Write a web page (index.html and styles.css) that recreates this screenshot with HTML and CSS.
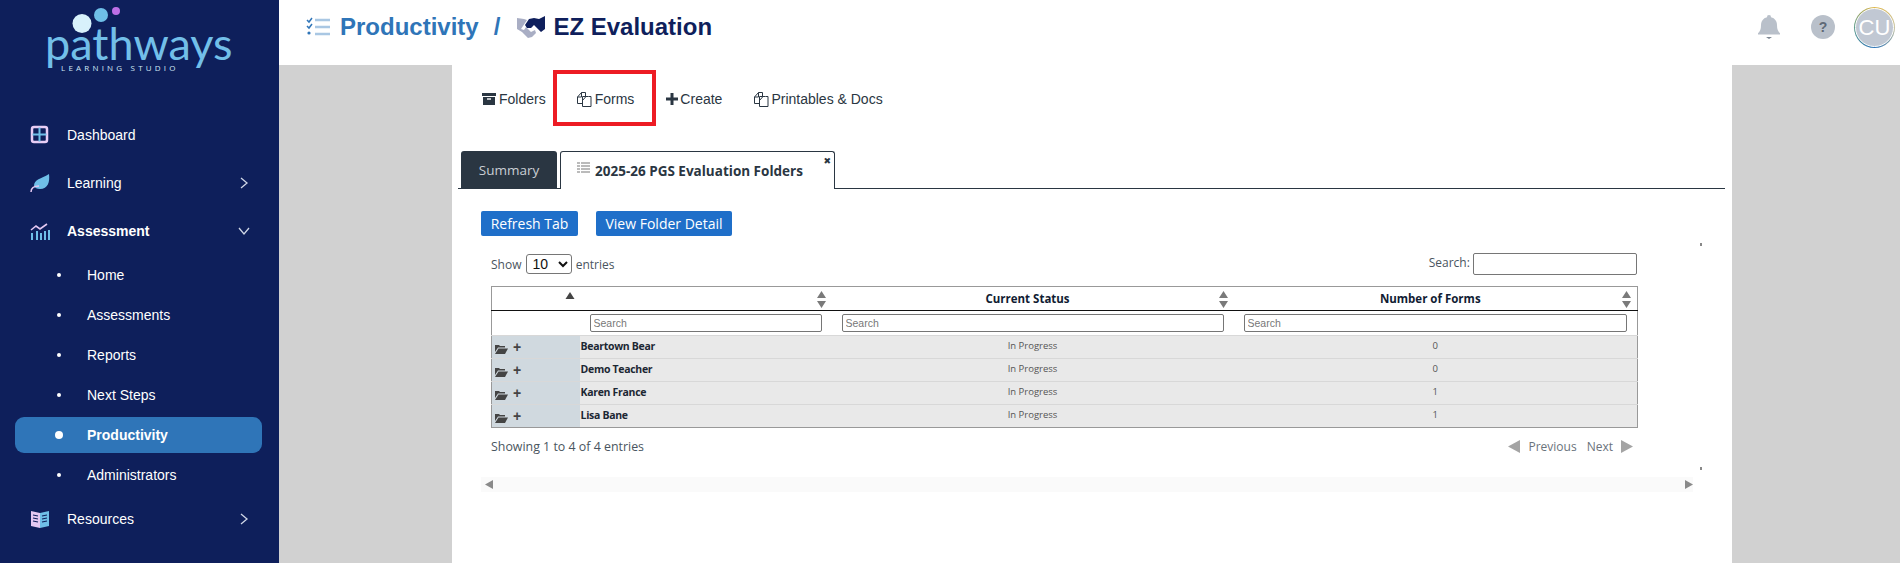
FILE: index.html
```html
<!DOCTYPE html>
<html lang="en">
<head>
<meta charset="utf-8">
<title>EZ Evaluation</title>
<link rel="stylesheet" href="styles.css">
</head>
<body>
<aside class="sidebar">
  <div class="logo">
    <svg class="logo-dots" width="60" height="34" viewBox="0 0 60 34"><circle cx="12" cy="23.500" r="9.500" fill="#d8f1fb"/><circle cx="31" cy="15" r="7" fill="#6fbfe8"/><circle cx="46" cy="11" r="4" fill="#bd6fe6"/></svg>
    <div class="logo-word">pathways</div>
    <div class="logo-sub">LEARNING STUDIO</div>
  </div>
  <nav class="nav">
    <a class="nav-item"><svg class="nav-icon" viewBox="0 0 20 20"><rect x="2" y="2" width="15" height="15" rx="2" fill="#0e1f5b" stroke="#e8cdf5" stroke-width="2.500"/><path d="M9.500 2.500v14M2.500 9.500h14" stroke="#6fbfe8" stroke-width="2"/></svg><span>Dashboard</span></a>
    <a class="nav-item"><svg class="nav-icon" viewBox="0 0 20 20"><path d="M4 13C4 6 11 6 19 1c1 8-1 15-9 15-3 0-5-1-6-3z" fill="#6fbfe8"/><path d="M1 19c0-4 3-6 8-6" fill="none" stroke="#e4c8f2" stroke-width="1.500"/></svg><span>Learning</span><svg class="chev" viewBox="0 0 12 12"><path d="M3 1l6 5-6 5" fill="none" stroke="#cfd6e6" stroke-width="1.300"/></svg></a>
    <a class="nav-item nav-open"><svg class="nav-icon" viewBox="0 0 20 20"><path d="M1 9l5-4 4 3 7-5" fill="none" stroke="#e4c8f2" stroke-width="1.600"/><path d="M2 12v7M7 10v9M11 12v7M15 10v9M19 9v10" stroke="#6fbfe8" stroke-width="2"/></svg><span>Assessment</span><svg class="chev" viewBox="0 0 12 12"><path d="M1 3l5 6 5-6" fill="none" stroke="#cfd6e6" stroke-width="1.300"/></svg></a>
    <a class="sub-item"><i></i><span>Home</span></a>
    <a class="sub-item"><i></i><span>Assessments</span></a>
    <a class="sub-item"><i></i><span>Reports</span></a>
    <a class="sub-item"><i></i><span>Next Steps</span></a>
    <a class="sub-item sub-active"><i></i><span>Productivity</span></a>
    <a class="sub-item"><i></i><span>Administrators</span></a>
    <a class="nav-item"><svg class="nav-icon" viewBox="0 0 20 20"><path d="M1 2l9 2v15l-9-2z" fill="#e4c8f2"/><path d="M19 2l-9 2v15l9-2z" fill="#6fbfe8"/><path d="M3 6l5 1M3 9l5 1M3 12l5 1M12 7l5-1M12 10l5-1M12 13l5-1" stroke="#0e1f5b" stroke-width="1.200"/></svg><span>Resources</span><svg class="chev" viewBox="0 0 12 12"><path d="M3 1l6 5-6 5" fill="none" stroke="#cfd6e6" stroke-width="1.300"/></svg></a>
  </nav>
</aside>
<main class="main">
  <header class="topbar">
    <svg class="crumb-icon" width="24" height="20" viewBox="0 0 24 20"><path d="M1 3l2 2 3-4M1 9l2 2 3-4" fill="none" stroke="#2f75b8" stroke-width="1.500"/><circle cx="3" cy="16" r="1.600" fill="#2f75b8"/><path d="M9 3h15M9 10h15M9 17h15" stroke="#a9c7e3" stroke-width="2.400"/></svg>
    <span class="crumb">Productivity</span>
    <span class="crumb crumb-slash">/</span>
    <svg class="shake" width="28" height="23" viewBox="0 0 28 23"><path d="M0 2l7 1 3 1-4 6-2 3 3 1 2-3 5 5 4-2 1 3-4 4-4 1-6-6-5-3z" fill="#a9aec4"/><path d="M8 9l4-6 5-1 5 1 6-3v13l-4 3-7-7-3 3-4 0z" fill="#0f1f5c"/></svg>
    <span class="crumb crumb-page">EZ Evaluation</span>
    <div class="top-actions">
      <svg class="bell" width="24" height="26" viewBox="0 0 24 26"><path d="M12 1a2 2 0 0 1 2 2.200c4 1 6 4 6 8 0 4 1 6 3 8v1.300H1V19.200c2-2 3-4 3-8 0-4 2-7 6-8A2 2 0 0 1 12 1z" fill="#b9c0ca"/><path d="M9 23h6l-3 2z" fill="#7c8591"/></svg>
      <span class="help">?</span>
      <span class="avatar"><span class="avatar-in">CU</span></span>
    </div>
  </header>
  <div class="stage">
    <section class="panel">
      <div class="toolbar">
        <a class="tool tool-folders"><svg width="14" height="14" viewBox="0 0 14 14"><path d="M0 1h14v3H0z" fill="#2a3642"/><path d="M1 5h12v8H1z" fill="#2a3642"/><path d="M5 7h4" stroke="#fff" stroke-width="1.400"/></svg>Folders</a>
        <a class="tool tool-forms"><svg width="15" height="15" viewBox="0 0 15 15"><use href="#copy"/></svg>Forms</a>
        <a class="tool tool-create"><svg width="12" height="12" viewBox="0 0 12 12"><path d="M6 0v12M0 6h12" stroke="#2a3642" stroke-width="3"/></svg>Create</a>
        <a class="tool tool-print"><svg width="15" height="15" viewBox="0 0 15 15"><use href="#copy"/></svg>Printables &amp; Docs</a>
      </div>
      <span class="highlight"></span>
      <svg class="defs" width="0" height="0"><defs><g id="copy" fill="none" stroke="#2a3642" stroke-width="1"><path d="M5.500 11.500H.5V5L4.500.5h4V4.500"/><path d="M4.500.5V5H.5"/><path d="M5.500 4.500h6l2.500 0v10H5.500zM5.500 8.500l3.500-4"/></g></defs></svg>
      <div class="tabs">
        <a class="tab tab-dark">Summary</a>
        <a class="tab tab-active"><svg class="tab-list" width="13" height="12" viewBox="0 0 13 12"><path d="M0 1h3M4 1h9M0 4h3M4 4h9M0 7h3M4 7h9M0 10h3M4 10h9" stroke="#a5a5a5" stroke-width="1.600"/></svg>2025-26 PGS Evaluation Folders<b class="tab-x">✖</b></a>
      </div>
      <div class="buttons">
        <button class="btn btn-refresh">Refresh Tab</button>
        <button class="btn">View Folder Detail</button>
      </div>
      <div class="scroller">
        <div class="dt-top">
          <label class="dt-len">Show <select class="dt-select"><option>10</option></select> entries</label>
          <label class="dt-search">Search: <input class="dt-input" type="text"></label>
        </div>
        <table class="grid">
          <colgroup><col class="c0"><col class="c1"><col class="c2"><col class="c3"></colgroup>
          <thead>
            <tr class="head">
              <th colspan="2" class="h-first"><span class="h-split"><span class="h-a"><svg class="sort-up" width="10" height="7" viewBox="0 0 10 7"><path d="M5 0l4.500 7H.500z" fill="#444"/></svg></span><span class="h-b"><svg class="sort" width="9" height="17" viewBox="0 0 9 17"><path d="M4.500 0L9 7H0zM4.500 17L0 10h9z" fill="#7a7a7a"/></svg></span></span></th>
              <th>Current Status<svg class="sort" width="9" height="17" viewBox="0 0 9 17"><path d="M4.500 0L9 7H0zM4.500 17L0 10h9z" fill="#7a7a7a"/></svg></th>
              <th>Number of Forms<svg class="sort" width="9" height="17" viewBox="0 0 9 17"><path d="M4.500 0L9 7H0zM4.500 17L0 10h9z" fill="#7a7a7a"/></svg></th>
            </tr>
            <tr class="filters">
              <td></td>
              <td><input class="f-input" placeholder="Search"></td>
              <td><input class="f-input" placeholder="Search"></td>
              <td><input class="f-input" placeholder="Search"></td>
            </tr>
          </thead>
          <tbody>
            <tr><td class="ctl"><svg width="13" height="10" viewBox="0 0 13 10"><use href="#fo"/></svg><span class="plus">+</span></td><td class="name">Beartown Bear</td><td class="val">In Progress</td><td class="val">0</td></tr>
            <tr><td class="ctl"><svg width="13" height="10" viewBox="0 0 13 10"><use href="#fo"/></svg><span class="plus">+</span></td><td class="name">Demo Teacher</td><td class="val">In Progress</td><td class="val">0</td></tr>
            <tr><td class="ctl"><svg width="13" height="10" viewBox="0 0 13 10"><use href="#fo"/></svg><span class="plus">+</span></td><td class="name">Karen France</td><td class="val">In Progress</td><td class="val">1</td></tr>
            <tr><td class="ctl"><svg width="13" height="10" viewBox="0 0 13 10"><use href="#fo"/></svg><span class="plus">+</span></td><td class="name">Lisa Bane</td><td class="val">In Progress</td><td class="val">1</td></tr>
          </tbody>
        </table>
        <svg class="defs" width="0" height="0"><defs><g id="fo"><path d="M0 1h4l1 1h5v1.500H3L0 8z" fill="#444"/><path d="M3.500 4.500H13L10 10H0z" fill="#444"/></g></defs></svg>
        <div class="dt-foot">
          <span class="dt-info">Showing 1 to 4 of 4 entries</span>
          <span class="dt-pages"><svg width="12" height="13" viewBox="0 0 12 13"><path d="M0 6.500L12 0v13z" fill="#a4a4a4"/></svg><a class="pg pg-prev">Previous</a><a class="pg pg-next">Next</a><svg width="12" height="13" viewBox="0 0 12 13"><path d="M12 6.500L0 0v13z" fill="#a4a4a4"/></svg></span>
        </div>
        <div class="hscroll">
          <svg width="8" height="9" viewBox="0 0 8 9"><path d="M0 4.500L8 0v9z" fill="#8a8a8a"/></svg>
          <svg width="8" height="9" viewBox="0 0 8 9"><path d="M8 4.500L0 0v9z" fill="#8a8a8a"/></svg>
        </div>
        <span class="vmark vmark-top"></span>
        <span class="vmark vmark-bot"></span>
      </div>
    </section>
  </div>
</main>
</body>
</html>
```
FILE: styles.css
```css
* { box-sizing: border-box; }
html, body { height: 100%; }
body {
  margin: 0;
  display: flex;
  height: 563px;
  overflow: hidden;
  font-family: "Liberation Sans", Arial, sans-serif;
  background: #fff;
}

/* sidebar */
.sidebar { width: 279px; flex: none; background: #0e1f5b; color: #fff; }
.logo { position: relative; height: 111px; }
.logo-dots { position: absolute; left: 70px; top: 0; }
.logo-word {
  position: absolute; left: 45px; top: 26px;
  font-family: Lato, sans-serif; font-weight: 400; font-size: 45px; line-height: 34px;
  color: #72bfe9;
}
.logo-sub {
  position: absolute; left: 61px; top: 64px;
  font-family: "Open Sans", sans-serif; font-size: 8px; line-height: 8px;
  letter-spacing: 3.2px; color: #cfe6f5; white-space: nowrap;
}
.nav { display: flex; flex-direction: column; }
.nav-item { display: flex; align-items: center; height: 48px; padding: 0 29px 0 30px; font-size: 14px; color: #fff; }
.nav-icon { width: 20px; height: 20px; flex: none; margin-right: 17px; }
.nav-open { font-weight: 700; }
.chev { width: 12px; height: 12px; margin-left: auto; }
.sub-item {
  display: flex; align-items: center; height: 36px; margin: 2px 17px 2px 15px;
  padding-left: 42px; border-radius: 9px; font-size: 14px; color: #fff;
}
.sub-item i { width: 4px; height: 4px; border-radius: 50%; background: #fff; margin-right: 26px; flex: none; }
.sub-active { background: #2f75b8; font-weight: 700; }
.sub-active i { width: 8px; height: 8px; margin-left: -2px; margin-right: 24px; }

/* main */
.main { flex: 1; display: flex; flex-direction: column; min-width: 0; }
.topbar { height: 65px; flex: none; display: flex; align-items: center; padding: 0 0 11px 27px; background: #fff; }
.crumb-icon { margin-right: 10px; }
.crumb { font-size: 24px; font-weight: 700; color: #2f75b8; }
.crumb-slash { margin: 0 17px 0 15px; }
.shake { margin-right: 8px; }
.crumb-page { color: #0f1f5c; }
.top-actions { margin-left: auto; display: flex; align-items: center; padding-right: 5px; }
.bell { margin-right: 30px; }
.help {
  width: 24px; height: 24px; border-radius: 50%; background: #b9c0ca; color: #5f6976;
  font-size: 14px; font-weight: 700; text-align: center; line-height: 24px; margin-right: 19px;
}
.avatar { width: 41px; height: 41px; border-radius: 50%; padding: 1px; background: conic-gradient(#e0b84a, #c7c2a0 25%, #2f75b8 50%, #5a9a8a 75%, #e0b84a); }
.avatar-in {
  display: block; width: 39px; height: 39px; border-radius: 50%; background: #c1c8d3; border: 1px solid #fff;
  color: #fff; font-size: 22px; line-height: 37px; text-align: center;
}
.stage { flex: 1; background: #d1d1d1; padding: 0 168px 0 173px; min-height: 0; }
.panel { position: relative; height: 100%; background: #fff; padding: 0 7px 0 6px; }

/* toolbar */
.toolbar { display: flex; align-items: center; height: 68px; font-size: 14px; color: #2a3642; }
.tool { display: flex; align-items: center; gap: 3px; }
.tool-folders { margin-left: 24px; }
.tool-forms { margin-left: 31px; }
.tool-create { margin-left: 32px; gap: 2px; }
.tool-print { margin-left: 32px; gap: 2px; }
.highlight { position: absolute; left: 101px; top: 5px; width: 103px; height: 56px; border: 4px solid #ed1c24; }
.defs { position: absolute; }

/* tabs */
.tabs { display: flex; align-items: flex-end; height: 38px; margin-top: 18px; border-bottom: 1px solid #2a3642; padding-left: 3px; font-family: "Open Sans", sans-serif; font-size: 13.500px; }
.tab { height: 37px; display: flex; align-items: center; border-radius: 3px 3px 0 0; }
.tab-dark { width: 96px; justify-content: center; background: #2a3642; color: #c9ced4; margin-right: 3px; }
.tab-active {
  position: relative; width: 275px; height: 38px; margin-bottom: -1px; padding-left: 16px;
  background: #fff; border: 1px solid #2a3642; border-bottom: 0; color: #2a3642; font-weight: 700;
}
.tab-list { margin-right: 5px; margin-top: -6px; }
.tab-x { position: absolute; right: 3px; top: 2px; font-size: 9px; line-height: 14px; color: #2a3642; font-family: "DejaVu Sans", sans-serif; }

/* buttons */
.buttons { display: flex; gap: 18px; margin: 22px 0 0 23px; }
.btn { height: 25px; padding: 0; width: 136px; border: 0; border-radius: 2px; background: #1f6fc9; color: #fff; font-family: "Open Sans", sans-serif; font-size: 14px; }
.btn-refresh { width: 97px; }

/* datatable */
.scroller { position: relative; margin: 8px 0 0 23px; height: 255px; width: 1219px; padding: 9px 0 0 10px; font-family: "Open Sans", sans-serif; font-size: 12px; color: #4a5560; }
.dt-top { display: flex; justify-content: space-between; align-items: center; height: 22px; width: 1146px; }
.dt-select { width: 46px; height: 20px; margin: 0 1px; padding: 0 2px; font-family: "Liberation Sans", sans-serif; font-size: 14px; background: #fff; border: 1px solid #767676; border-radius: 3px; color: #111; }
.dt-input { width: 164px; height: 22px; border: 1px solid #767676; border-radius: 2px; vertical-align: middle; }
.grid { table-layout: fixed; width: 1146px; margin-top: 11px; border-collapse: collapse; border: 1px solid #999; }
.c0 { width: 88px; } .c1 { width: 252px; } .c2 { width: 402px; } .c3 { width: 404px; }
.head th { height: 24px; padding: 0 10px 0 0; border-bottom: 1px solid #111; position: relative; font-size: 11.500px; font-weight: 700; color: #111c33; text-align: center; }
.head .h-first { padding: 0; }
.h-split { display: flex; height: 23px; }
.h-a { width: 88px; position: relative; }
.h-b { flex: 1; position: relative; }
.sort { position: absolute; right: 6px; top: 4px; }
.sort-up { position: absolute; right: 5px; top: 5px; }
.filters td { height: 25px; padding: 0 10px; }
.f-input { display: block; width: 100%; height: 18px; padding: 0 3px; border: 1px solid #767676; border-radius: 2px; font-family: "Liberation Sans", sans-serif; font-size: 10.500px; }
.f-input::placeholder { color: #777; }
tbody tr td { height: 23px; background: #e9e9e9; border-top: 1px solid #d8d8d8; padding: 0; }
tbody .ctl { background: #d0d9df; padding-left: 3px; color: #444; white-space: nowrap; }
.ctl svg { vertical-align: -2px; }
.plus { font-family: "Liberation Sans", sans-serif; font-weight: 700; font-size: 14px; margin-left: 5px; color: #444; line-height: 1; }
tbody .name { padding: 0 0 3px 1px; font-size: 10.500px; letter-spacing: -0.3px; font-weight: 700; color: #1c2733; }
tbody .val { padding-bottom: 3px; text-align: center; font-size: 9.500px; color: #555; }
.dt-foot { display: flex; justify-content: space-between; align-items: center; width: 1146px; height: 37px; font-size: 12.400px; }
.dt-pages { display: flex; align-items: center; padding-right: 4px; font-size: 12px; color: #6a737c; }
.pg-prev { margin: 0 10px 0 8px; }
.pg-next { margin-right: 8px; }
.hscroll { position: absolute; left: 0; right: 7px; top: 233px; height: 15px; background: #fafafa; display: flex; justify-content: space-between; align-items: center; padding: 0 0 0 4px; }
.vmark { position: absolute; right: -2px; width: 2px; height: 3px; background: #888; }
.vmark-top { top: -1px; }
.vmark-bot { top: 223px; }
```
